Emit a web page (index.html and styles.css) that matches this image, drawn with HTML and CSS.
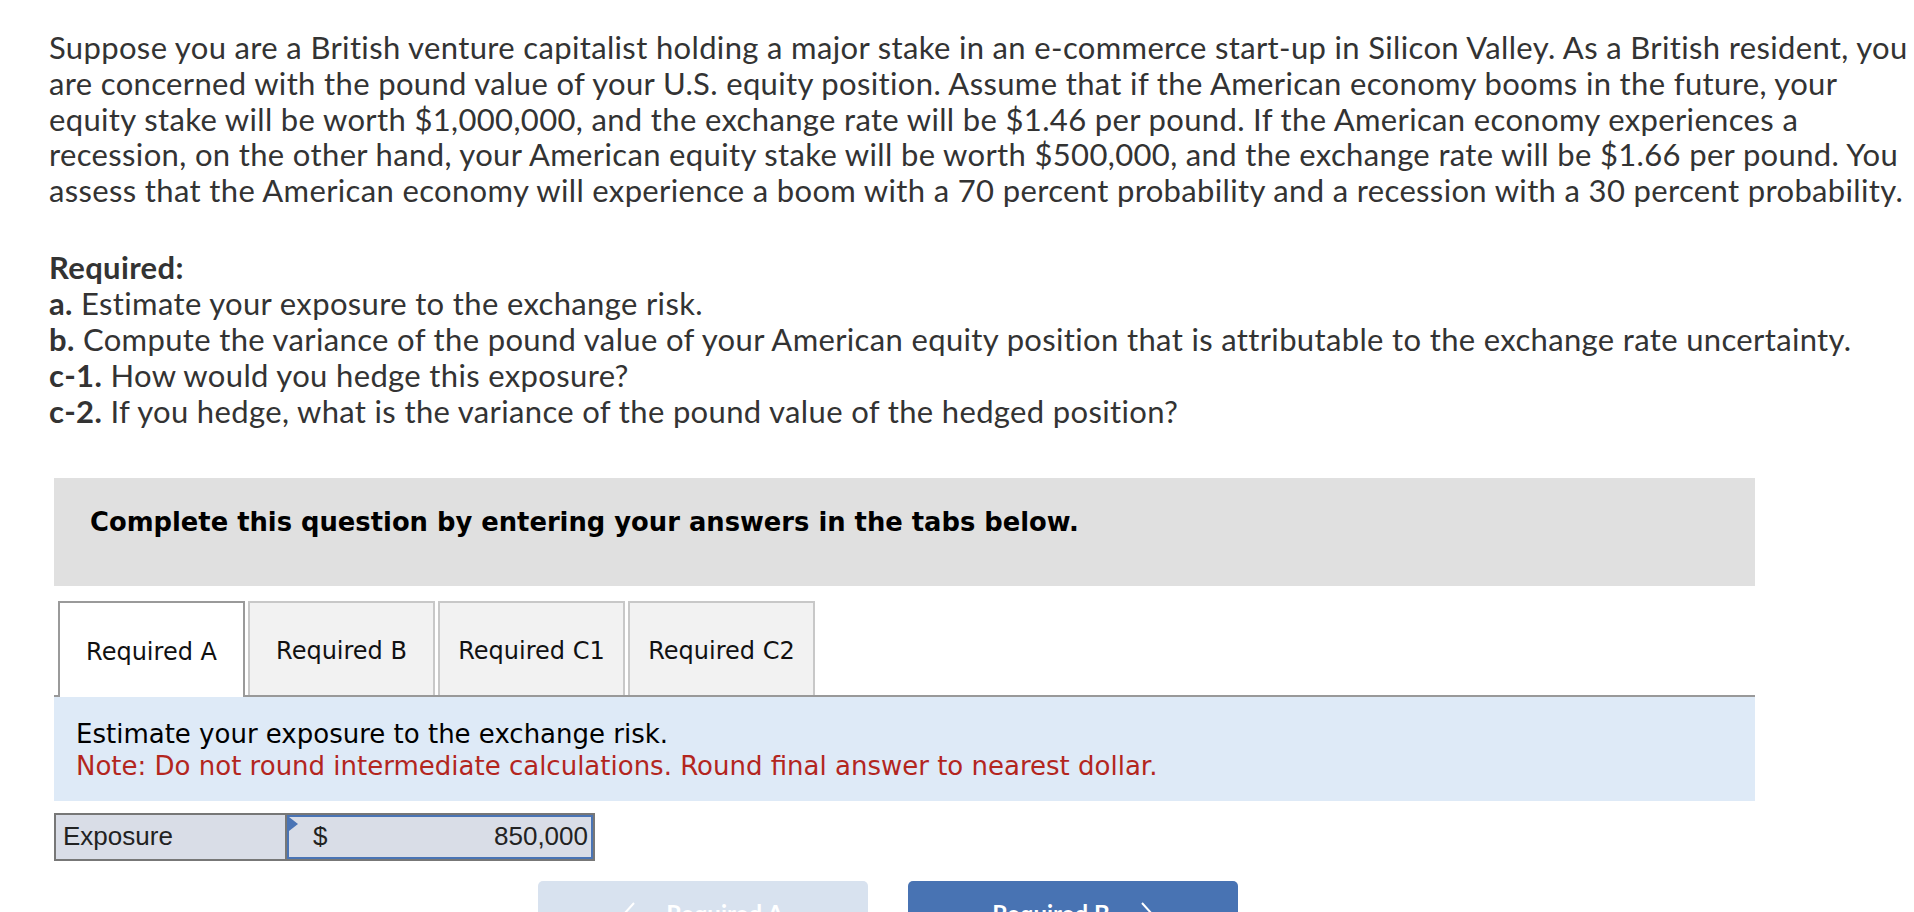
FILE: index.html
```html
<!DOCTYPE html>
<html lang="en">
<head>
<meta charset="utf-8">
<title>Exchange risk exposure</title>
<link rel="stylesheet" href="styles.css">
</head>
<body>
<div class="page">
  <p class="stem">Suppose you are a British venture capitalist holding a major stake in an e-commerce start-up in Silicon Valley. As a British resident, you<br>are concerned with the pound value of your U.S. equity position. Assume that if the American economy booms in the future, your<br>equity stake will be worth $1,000,000, and the exchange rate will be $1.46 per pound. If the American economy experiences a<br>recession, on the other hand, your American equity stake will be worth $500,000, and the exchange rate will be $1.66 per pound. You<br>assess that the American economy will experience a boom with a 70 percent probability and a recession with a 30 percent probability.</p>

  <div class="required">
    <div class="req-title">Required:</div>
    <div><b>a.</b> Estimate your exposure to the exchange risk.</div>
    <div><b>b.</b> Compute the variance of the pound value of your American equity position that is attributable to the exchange rate uncertainty.</div>
    <div><b>c-1.</b> How would you hedge this exposure?</div>
    <div><b>c-2.</b> If you hedge, what is the variance of the pound value of the hedged position?</div>
  </div>

  <div class="widget">
    <div class="instructions">Complete this question by entering your answers in the tabs below.</div>

    <div class="tabs">
      <div class="tab active">Required A</div>
      <div class="tab">Required B</div>
      <div class="tab">Required C1</div>
      <div class="tab">Required C2</div>
    </div>

    <div class="panel">
      <div>Estimate your exposure to the exchange risk.</div>
      <div class="note">Note: Do not round intermediate calculations. Round final answer to nearest dollar.</div>
    </div>

    <div class="answer">
      <div class="answer-label">Exposure</div>
      <div class="answer-input"><span>$</span><span>850,000</span></div>
    </div>

    <div class="nav">
      <div class="nav-btn prev">
        <svg class="chev" width="14" height="24" viewBox="0 0 14 24"><polyline points="12,1 2,12 12,23" fill="none" stroke="currentColor" stroke-width="2"/></svg>
        <span>Required A</span>
      </div>
      <div class="nav-btn next">
        <span>Required B</span>
        <svg class="chev" width="14" height="24" viewBox="0 0 14 24"><polyline points="2,1 12,12 2,23" fill="none" stroke="currentColor" stroke-width="2"/></svg>
      </div>
    </div>
  </div>
</div>
</body>
</html>
```

FILE: styles.css
```css
html, body {
  margin: 0;
  padding: 0;
  background: #ffffff;
}

body {
  font-family: "Lato", "Open Sans", sans-serif;
  color: #333333;
  overflow: hidden;
}

.page {
  padding: 30px 0 0 49px;
}

.stem {
  margin: 0;
  font-size: 31px;
  letter-spacing: 0.35px;
  line-height: 35.75px;
  white-space: nowrap;
}

.required {
  margin-top: 40px;
  font-size: 31px;
  letter-spacing: 0.35px;
  line-height: 36px;
  white-space: nowrap;
}

.required b,
.req-title {
  font-weight: 700;
}

.widget {
  margin: 49px 0 0 5px;
  width: 1701px;
}

.instructions {
  box-sizing: border-box;
  height: 108px;
  padding: 30px 0 0 36px;
  background: #e0e0e0;
  color: #000000;
  font: bold 25.8px/28px "DejaVu Sans", Verdana, sans-serif;
}

.tabs {
  display: flex;
  align-items: flex-start;
  gap: 3px;
  height: 94px;
  margin-top: 15px;
  padding-left: 4px;
  position: relative;
  z-index: 1;
}

.tab {
  box-sizing: border-box;
  width: 187px;
  height: 94px;
  display: flex;
  align-items: center;
  justify-content: center;
  padding-top: 4px;
  border: 2px solid #c8c8c8;
  border-bottom: 0;
  background: #f2f2f2;
  color: #111111;
  font: 24px "DejaVu Sans", Verdana, sans-serif;
}

.tab.active {
  height: 96px;
  border-color: #9a9a9a;
  background: #ffffff;
}

.panel {
  border-top: 2px solid #999999;
  background: #deeaf7;
  padding: 21px 22px 19px;
  color: #000000;
  font: 26px/32px "DejaVu Sans", Verdana, sans-serif;
}

.note {
  color: #b3261e;
}

.answer {
  box-sizing: border-box;
  display: flex;
  width: 541px;
  height: 48px;
  margin-top: 12px;
  border: 2px solid #777777;
  background: #d9dde7;
  font: 26px "Liberation Sans", Arial, sans-serif;
  color: #222222;
}

.answer-label {
  box-sizing: border-box;
  width: 231px;
  border-right: 2px solid #777777;
  padding-left: 7px;
  display: flex;
  align-items: center;
}

.answer-input {
  flex: 1;
  position: relative;
  display: flex;
  align-items: center;
  justify-content: space-between;
  border: 2px solid #4a74b5;
  padding: 0 3px 0 24px;
}

.answer-input::before {
  content: "";
  position: absolute;
  left: 0;
  top: 0;
  border-left: 9px solid #4a74b5;
  border-top: 7px solid transparent;
  border-bottom: 7px solid transparent;
}

.nav {
  display: flex;
  gap: 40px;
  margin-top: 20px;
  padding-left: 484px;
}

.nav-btn {
  box-sizing: border-box;
  width: 330px;
  height: 66px;
  border-radius: 5px;
  display: flex;
  align-items: center;
  justify-content: center;
  gap: 30px;
  color: #ffffff;
  font: bold 24px "Lato", sans-serif;
}

.nav-btn.prev {
  background: #d8e2ef;
}

.nav-btn.next {
  background: #4873b3;
}

.chev {
  display: block;
}
```
